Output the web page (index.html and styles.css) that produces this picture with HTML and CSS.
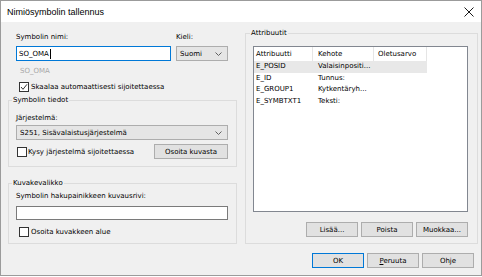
FILE: index.html
```html
<!DOCTYPE html>
<html lang="fi">
<head>
	<meta charset="UTF-8">
	<title>Nimiösymbolin tallennus</title>
	<link rel="stylesheet" href="styles.css">
</head>
<body>
	<div class="window">
		<div class="titlebar">
			<span class="title">Nimiösymbolin tallennus</span>
			<svg class="close" width="10" height="10" viewBox="0 0 10 10">
				<path d="M0.5 0.5 L9.5 9.5 M9.5 0.5 L0.5 9.5" stroke="#1a1a1a" stroke-width="1" fill="none"/>
			</svg>
		</div>
		<div class="content">
			<div class="left">
				<div class="name-row">
					<div class="name-field">
						<div class="label">Symbolin nimi:</div>
						<div class="input focused">SO_OMA<span class="caret"></span></div>
					</div>
					<div class="lang-field">
						<div class="label">Kieli:</div>
						<div class="combo">
							<span>Suomi</span>
							<svg width="7" height="4" viewBox="0 0 7 4"><polyline points="0.5,0.5 3.5,3.5 6.5,0.5" stroke="#606060" fill="none"/></svg>
						</div>
					</div>
				</div>
				<div class="disabled">SO_OMA</div>
				<div class="check top-check">
					<span class="box"><svg width="8" height="8" viewBox="0 0 8 8"><polyline points="1,4 3,6.3 7,1.3" stroke="#333" stroke-width="1" fill="none"/></svg></span>
					<span>Skaalaa automaattisesti sijoitettaessa</span>
				</div>

				<fieldset class="group group-info">
					<legend>Symbolin tiedot</legend>
					<div class="label">Järjestelmä:</div>
					<div class="combo wide">
						<span>S251, Sisävalaistusjärjestelmä</span>
						<svg width="7" height="4" viewBox="0 0 7 4"><polyline points="0.5,0.5 3.5,3.5 6.5,0.5" stroke="#606060" fill="none"/></svg>
					</div>
					<div class="info-row">
						<div class="check info-check">
							<span class="box"></span>
							<span>Kysy järjestelmä sijoitettaessa</span>
						</div>
						<button class="btn btn-pick">Osoita kuvasta</button>
					</div>
				</fieldset>

				<fieldset class="group group-menu">
					<legend>Kuvakevalikko</legend>
					<div class="label">Symbolin hakupainikkeen kuvausrivi:</div>
					<div class="input menu-input"></div>
					<div class="check menu-check">
						<span class="box"></span>
						<span>Osoita kuvakkeen alue</span>
					</div>
				</fieldset>
			</div>

			<fieldset class="group group-attr">
				<legend>Attribuutit</legend>
				<div class="list">
					<div class="list-head">
						<div class="cell c1">Attribuutti</div>
						<div class="cell c2">Kehote</div>
						<div class="cell c3">Oletusarvo</div>
					</div>
					<div class="row selected">
						<div class="cell c1">E_POSID</div>
						<div class="cell c2">Valaisinpositi...</div>
						<div class="cell c3"></div>
					</div>
					<div class="row">
						<div class="cell c1">E_ID</div>
						<div class="cell c2">Tunnus:</div>
						<div class="cell c3"></div>
					</div>
					<div class="row">
						<div class="cell c1">E_GROUP1</div>
						<div class="cell c2">Kytkentäryh...</div>
						<div class="cell c3"></div>
					</div>
					<div class="row">
						<div class="cell c1">E_SYMBTXT1</div>
						<div class="cell c2">Teksti:</div>
						<div class="cell c3"></div>
					</div>
				</div>
				<div class="list-buttons">
					<button class="btn">Lisää...</button>
					<button class="btn">Poista</button>
					<button class="btn">Muokkaa...</button>
				</div>
			</fieldset>
		</div>
		<div class="footer">
			<button class="btn default">OK</button>
			<button class="btn"><u>P</u>eruuta</button>
			<button class="btn">Ohje</button>
		</div>
	</div>
</body>
</html>
```

FILE: styles.css
```css
body{
	margin: 0;
	background: #fff;
	font-family: "DejaVu Sans", Verdana, sans-serif;
	font-size: 7px;
	color: #000;
}
.window{
	width: 480px;
	height: 274px;
	border: 1px solid #9b9b9b;
	background: #f0f0f0;
	display: flex;
	flex-direction: column;
}
.titlebar{
	height: 21px;
	background: #fff;
	display: flex;
	align-items: center;
	justify-content: space-between;
	padding: 0 7px 0 6px;
	font-family: "Liberation Sans", Arial, sans-serif;
	font-size: 9px;
}
.close{
	display: block;
}
.content{
	display: flex;
	gap: 8px;
	padding: 6px 3px 0 7px;
}
.left{
	width: 229px;
	padding-top: 4px;
	display: flex;
	flex-direction: column;
}
.label{
	height: 10px;
	line-height: 10px;
	white-space: nowrap;
}
.name-row{
	display: flex;
	gap: 5px;
	padding-left: 8px;
}
.name-field{
	width: 155px;
}
.lang-field{
	width: 52px;
}
.input{
	box-sizing: border-box;
	height: 15px;
	margin-top: 4px;
	border: 1px solid #7a7a7a;
	background: #fff;
	padding-left: 2px;
	display: flex;
	align-items: center;
}
.input.focused{
	border-color: #0078d7;
}
.caret{
	width: 1px;
	height: 10px;
	background: #000;
	margin-left: 1px;
}
.combo{
	box-sizing: border-box;
	height: 15px;
	margin-top: 4px;
	border: 1px solid #adadad;
	background: #e5e5e5;
	display: flex;
	align-items: center;
	justify-content: space-between;
	padding: 0 5px 0 3px;
}
.combo.wide{
	margin-top: 2px;
}
.disabled{
	color: #a8a8a8;
	line-height: 10px;
	margin-top: 5px;
	padding-left: 12px;
}
.check{
	display: flex;
	align-items: center;
	gap: 2px;
	line-height: 10px;
	white-space: nowrap;
}
.box{
	box-sizing: border-box;
	width: 10px;
	height: 10px;
	border: 1px solid #333;
	background: #fff;
	display: flex;
	align-items: center;
	justify-content: center;
}
.top-check{
	margin-top: 6px;
	padding-left: 11px;
}
.group{
	margin: 0;
	min-width: 0;
	border: 1px solid #dcdcdc;
}
.group legend{
	padding: 0 1px;
	margin-left: -4px;
	line-height: 10px;
}
.group-info{
	margin-top: 3px;
	padding: 8px 8px 7px 7px;
}
.info-row{
	display: flex;
	justify-content: space-between;
	align-items: center;
	margin-top: 4px;
}
.info-check{
	margin-left: 1px;
	gap: 1px;
}
.group-menu{
	margin-top: 11px;
	padding: 3px 8px 6px 7px;
}
.menu-input{
	height: 14px;
	margin-top: 5px;
}
.menu-check{
	margin-top: 7px;
	margin-left: 3px;
}
.btn{
	box-sizing: border-box;
	height: 15px;
	width: 52px;
	padding: 0;
	border: 1px solid #adadad;
	background: #e1e1e1;
	font-family: inherit;
	font-size: 7px;
	color: #000;
}
.btn.default{
	border-color: #0078d7;
}
.btn-pick{
	width: 74px;
}
.group-attr{
	flex: 1;
	padding: 8px 9px 6px 7px;
}
.group-attr legend{
	margin-left: -3px;
}
.list{
	box-sizing: border-box;
	height: 166px;
	border: 1px solid #828790;
	background: #fff;
}
.list-head, .row{
	display: flex;
}
.list-head{
	height: 14px;
	line-height: 14px;
}
.row{
	width: 173px;
	height: 11.5px;
	line-height: 11.5px;
}
.row.selected{
	background: #e8e8e8;
}
.cell{
	box-sizing: border-box;
	white-space: nowrap;
	overflow: hidden;
	padding-left: 5px;
}
.list-head .cell{
	border-right: 1px solid #e5e5e5;
}
.c1{
	width: 59px;
	padding-left: 2px;
}
.c2{
	width: 61px;
}
.c3{
	width: 53px;
	padding-left: 4px;
}
.list-buttons{
	display: flex;
	justify-content: flex-end;
	gap: 3px;
	margin-top: 10px;
}
.footer{
	display: flex;
	justify-content: flex-end;
	gap: 3px;
	padding: 9px 7px 0 0;
}
```
